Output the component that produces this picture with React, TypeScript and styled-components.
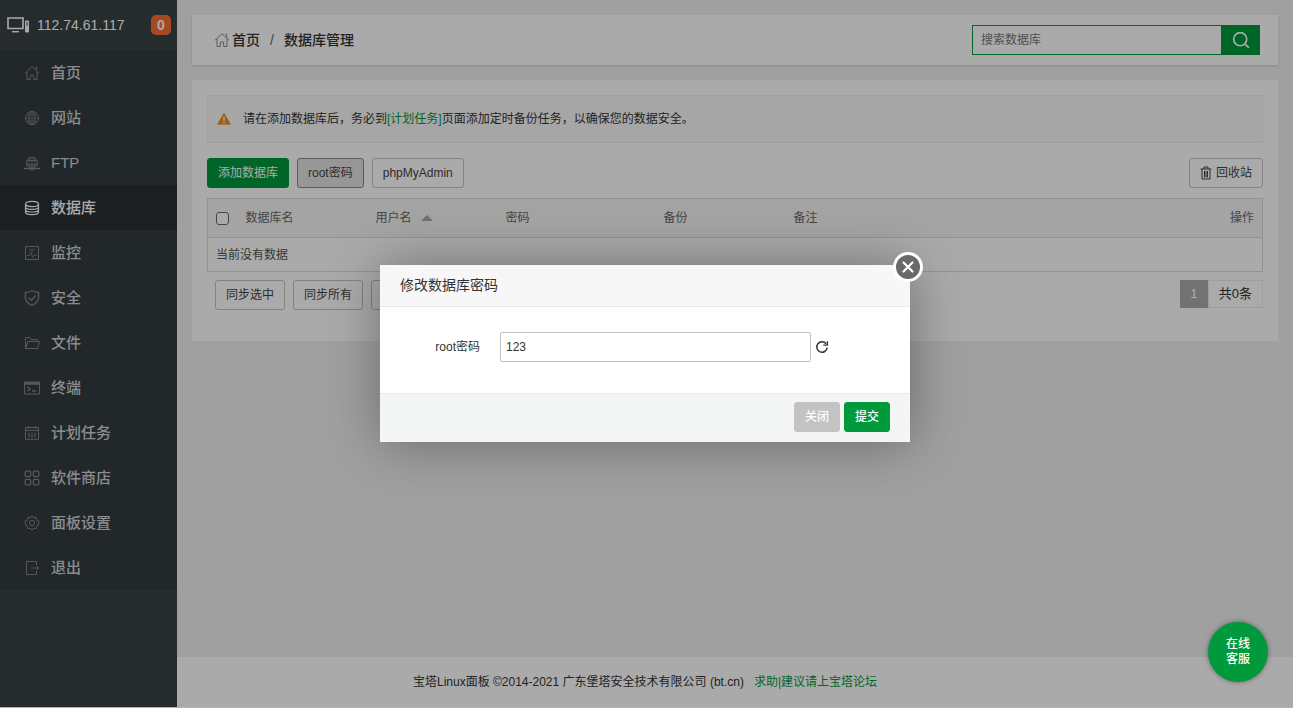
import React from "react";
import styled, { createGlobalStyle } from "styled-components";

const GREEN = "#00993c";

const GlobalStyle = createGlobalStyle`
  *, *::before, *::after { box-sizing: border-box; }
  body {
    margin: 0;
    background: #fff;
    color: #333;
    font: 12px/18px "Liberation Sans", Arial, "Noto Sans CJK SC", sans-serif;
  }
  button, input { font: inherit; }
  a { color: inherit; text-decoration: none; }
`;

/* ---------- page frame ---------- */

const Page = styled.div`
  position: relative;
  display: flex;
  min-height: calc(100vh - 2px);
  border-bottom: 1px solid #9dbcbd;
  background: #f0f0f0;
`;

const Sidebar = styled.aside`
  flex: none;
  width: 177px;
  background: #394146;
`;

const Host = styled.header`
  display: flex;
  align-items: center;
  height: 50px;
  padding: 0 6px 0 7px;
  gap: 8px;
  font-size: 14px;
  color: #fff;
`;

const HostName = styled.span`
  flex: 1;
`;

const Badge = styled.span`
  width: 20px;
  height: 20px;
  border-radius: 5px;
  background: #fc6d30;
  color: #fff;
  font-weight: 700;
  line-height: 20px;
  text-align: center;
`;

const Menu = styled.ul`
  margin: 0;
  padding: 0;
  list-style: none;
  background: #343b40;
`;

const MenuLink = styled.a<{ $active?: boolean }>`
  display: flex;
  align-items: center;
  gap: 11px;
  height: 45px;
  padding-left: 24px;
  font-size: 15px;
  font-weight: 500;
  color: ${(p) => (p.$active ? "#fff" : "#d0d3d5")};
  background: ${(p) => (p.$active ? "#2b2f33" : "transparent")};

  svg { color: ${(p) => (p.$active ? "#fff" : "#80868a")}; }
`;

const Main = styled.div`
  display: flex;
  flex: 1;
  flex-direction: column;
  min-width: 0;
`;

const Content = styled.main`
  display: flex;
  flex: 1;
  flex-direction: column;
  gap: 15px;
  padding: 15px;
`;

const Footer = styled.footer`
  display: flex;
  align-items: center;
  justify-content: center;
  gap: 10px;
  height: 50px;
  padding-right: 180px;
  background: #fff;
`;

const GreenLink = styled.a`
  color: ${GREEN};
`;

/* ---------- content ---------- */

const TopBar = styled.div`
  display: flex;
  align-items: center;
  justify-content: space-between;
  height: 50px;
  padding: 0 18px 0 22px;
  background: #fff;
  box-shadow: 0 1px 2px rgba(0, 0, 0, 0.15);
`;

const Breadcrumb = styled.nav`
  display: flex;
  align-items: center;
  font-size: 14px;
  font-weight: 500;

  svg { margin-right: 2px; color: #888; }
`;

const Slash = styled.span`
  padding: 0 10px;
  color: #666;
`;

const Search = styled.form`
  display: flex;
  height: 30px;
`;

const SearchInput = styled.input`
  width: 249px;
  padding: 0 8px;
  border: 1px solid ${GREEN};
  border-right: 0;
  background: #fff;
  color: #333;
  outline: 0;

  &::placeholder { color: #777; opacity: 1; }
`;

const SearchButton = styled.button`
  display: grid;
  place-items: center;
  width: 39px;
  padding: 0;
  border: 0;
  background: ${GREEN};
  color: #fff;
`;

const Panel = styled.section`
  padding: 15px 15px 31px;
  background: #fff;
`;

const Notice = styled.div`
  display: flex;
  align-items: center;
  gap: 12px;
  height: 48px;
  padding: 0 9px;
  border: 1px solid #efefef;
  background: #fafafa;
`;

const Toolbar = styled.div`
  display: flex;
  gap: 8px;
  margin: 15px 0 10px;
`;

const Button = styled.button<{ $kind?: "primary" | "pressed" | "muted" }>`
  display: inline-flex;
  align-items: center;
  gap: 4px;
  height: 30px;
  min-width: 46px;
  padding: 0 10px;
  border: 1px solid
    ${(p) => (p.$kind === "primary" ? GREEN : p.$kind === "pressed" ? "#8c8c8c" : p.$kind === "muted" ? "#c3c3c3" : "#c4c4c4")};
  border-radius: 3px;
  background: ${(p) => (p.$kind === "primary" ? GREEN : p.$kind === "pressed" ? "#e3e3e3" : p.$kind === "muted" ? "#c3c3c3" : "#fff")};
  color: ${(p) => (p.$kind === "primary" || p.$kind === "muted" ? "#fff" : "#444")};
  white-space: nowrap;
`;

const Spacer = styled.span`
  flex: 1;
`;

const Table = styled.table`
  width: 100%;
  table-layout: fixed;
  border-collapse: collapse;
  border: 1px solid #dcdcdc;
`;

const Col = styled.col<{ $width: number }>`
  width: ${(p) => p.$width}px;
`;

const Th = styled.th<{ $right?: boolean }>`
  height: 39px;
  padding: 0 8px;
  background: #f6f6f6;
  border-bottom: 1px solid #dcdcdc;
  color: #666;
  font-weight: 400;
  text-align: ${(p) => (p.$right ? "right" : "left")};
`;

const Td = styled.td`
  height: 34px;
  padding: 0 8px;
  color: #555;
`;

const Checkbox = styled.input`
  display: block;
  appearance: none;
  width: 13px;
  height: 13px;
  margin: 0;
  border: 1px solid #6a6a6a;
  border-radius: 3px;
  background: #fff;
`;

const SortArrow = styled.span`
  display: inline-block;
  margin-left: 9px;
  border: 6px solid transparent;
  border-top: 0;
  border-bottom-color: #aaa;
  vertical-align: 1px;
`;

const TableFoot = styled.div`
  display: flex;
  gap: 8px;
  padding: 8px 0 0 8px;
`;

const Pager = styled.div`
  display: flex;
  height: 28px;
  font-size: 13px;
  line-height: 28px;
`;

const PageNumber = styled.span`
  width: 28px;
  background: #acacac;
  color: #fff;
  text-align: center;
`;

const PageTotal = styled.span`
  padding: 0 10px;
  border: 1px solid #ececec;
  line-height: 26px;
`;

/* ---------- layers over the page ---------- */

const Shade = styled.div`
  position: absolute;
  inset: 0;
  display: grid;
  place-items: center;
  padding-right: 3px;
  background: rgba(0, 0, 0, 0.333);
`;

const Dialog = styled.div`
  position: relative;
  width: 530px;
  background: #fff;
  box-shadow: 1px 1px 50px rgba(0, 0, 0, 0.35);
`;

const DialogTitle = styled.h2`
  margin: 0;
  padding: 0 20px;
  border-bottom: 1px solid #e8e8e8;
  background: #f7f7f7;
  font-size: 14px;
  font-weight: 400;
  line-height: 41px;
`;

const DialogBody = styled.div`
  display: flex;
  align-items: center;
  padding: 25px 0 31px;
`;

const FieldLabel = styled.label`
  width: 100px;
  margin-right: 20px;
  text-align: right;
`;

const TextInput = styled.input`
  width: 311px;
  height: 30px;
  padding: 0 5px;
  border: 1px solid #c3c3c3;
  border-radius: 2px;
  background: #fff;
  color: #333;
  outline: 0;
`;

const IconButton = styled.button`
  display: grid;
  place-items: center;
  margin-left: 4px;
  padding: 0;
  border: 0;
  background: none;
  color: #333;
`;

const DialogFoot = styled.div`
  display: flex;
  justify-content: flex-end;
  gap: 4px;
  padding: 8px 20px 10px;
  border-top: 1px solid #eaeaea;
  background: #f4f6f6;
  font-weight: 500;
`;

const CloseButton = styled.button`
  position: absolute;
  top: -13px;
  right: -13px;
  display: grid;
  place-items: center;
  width: 30px;
  height: 30px;
  padding: 0;
  border: 3px solid #fff;
  border-radius: 50%;
  background: #696969;
  color: #fff;
`;

const Chat = styled.a`
  position: absolute;
  right: 25px;
  bottom: 25px;
  display: grid;
  place-content: center;
  width: 60px;
  height: 60px;
  border-radius: 50%;
  background: ${GREEN};
  box-shadow: 0 0 5px rgba(0, 0, 0, 0.4);
  color: #fff;
  font-weight: 500;
  line-height: 15px;
  text-align: center;
`;

/* ---------- icons ---------- */

type IconProps = { children: React.ReactNode; size?: number; width?: number };

const Icon = ({ children, size = 16, width = 1 }: IconProps) => (
  <svg width={size} height={size} viewBox="0 0 16 16" fill="none" stroke="currentColor" strokeWidth={width} aria-hidden="true">
    {children}
  </svg>
);

const HomeIcon = () => (
  <Icon>
    <path d="M1 8.3 8 1.8l7 6.5M3 7v7.500h3.300V10h3.400v4.500H13V7M11.200 2.200h1.500v3.600" />
  </Icon>
);

const icons: Record<string, React.ReactNode> = {
  home: <HomeIcon />,
  site: (
    <Icon>
      <circle cx="8" cy="8" r="6.5" />
      <ellipse cx="8" cy="8" rx="3" ry="6.5" />
      <path d="M8 1.5v13M1.5 8h13M2.5 4.800h11M2.5 11.200h11" strokeWidth="0.700" />
    </Icon>
  ),
  ftp: (
    <Icon>
      <path d="M4.2 12A5.600 5.600 0 1 1 11.800 12zM2.600 5.500h10.800M2.600 9.700h10.800M8 12v1" />
      <path d="M0 13.500h16" strokeWidth="1.400" />
      <path d="M6 12c-1.300-3.200-1.300-6.500 0-9.600M10 12c1.300-3.200 1.300-6.500 0-9.600M8 2v10" strokeWidth="0.800" />
      <ellipse cx="8" cy="14" rx="2" ry="1" />
    </Icon>
  ),
  database: (
    <Icon width={1.2}>
      <ellipse cx="8" cy="4" rx="6.500" ry="2.600" />
      <path d="M1.500 4v8c0 1.500 3 2.600 6.500 2.600s6.500-1.100 6.500-2.600V4M1.500 6.700c0 1.500 3 2.600 6.500 2.600s6.500-1.100 6.500-2.600M1.500 9.400C1.500 10.900 4.500 12 8 12s6.500-1.100 6.500-2.600" />
    </Icon>
  ),
  monitor: (
    <Icon>
      <path d="M1.500 1.500h13v13h-13z" />
      <path d="M3 10.500h2.500l1.200-3 2 5 1.300-3 1 1H13M5 4.500h6M6.500 6.500h3" strokeWidth="0.800" />
    </Icon>
  ),
  shield: (
    <Icon width={1.3}>
      <path d="M8 .8c2 1.300 4.300 1.700 6.600 1.700v5.300c0 3.500-2.800 5.900-6.600 7.500-3.800-1.600-6.600-4-6.600-7.500V2.500C3.700 2.500 6 2.100 8 .8z" />
      <path d="m4.700 7.600 2.600 2.700 4.400-4.800" />
    </Icon>
  ),
  folder: (
    <Icon>
      <path d="M1.500 13.500v-11h4.300l1.400 2h6.300v2M1.500 13.500l2.300-7h11.700l-2 7z" />
    </Icon>
  ),
  terminal: (
    <Icon>
      <path d="M.5 2h15v12H.5z" />
      <path d="M.5 3.500h15" strokeWidth="2.500" />
      <path d="m3.500 7 2.500 2-2.500 2.200M8 11h4" strokeWidth="1.300" />
    </Icon>
  ),
  schedule: (
    <Icon>
      <path d="M1.500 2.500h13v11.800h-13zM1.500 5.500h13M4.500 1v3M11.500 1v3M5 7.500v5M8 7.500v5M11 7.500v5" />
    </Icon>
  ),
  store: (
    <Icon width={1.3}>
      <rect x="1.200" y="1.200" width="5.400" height="5.400" rx="1" />
      <rect x="9.400" y="1.200" width="5.400" height="5.400" rx="1" />
      <rect x="1.200" y="9.400" width="5.400" height="5.400" rx="1" />
      <rect x="9.400" y="9.400" width="5.400" height="5.400" rx="1" />
    </Icon>
  ),
  settings: (
    <Icon>
      <path d="m8 .9 1.600 1.900 2.500-.5.500 2.500L15 6.200 14.200 8l.8 1.900-2.400 1.300-.5 2.500-2.500-.5L8 15.100l-1.600-1.900-2.500.5-.5-2.500L1 9.900 1.800 8 1 6.200l2.400-1.400.5-2.500 2.500.5z" />
      <circle cx="8" cy="8" r="2.600" />
    </Icon>
  ),
  logout: (
    <Icon>
      <path d="M12.500 5V1.500h-10v13h10V11M7 8h8M12.700 5.800 15 8l-2.300 2.200" />
    </Icon>
  ),
};

const HostIcon = () => (
  <svg width="22" height="16" viewBox="0 0 22 16" fill="none" stroke="#fff" aria-hidden="true">
    <path d="M1 1h15v10.500H1z" strokeWidth="1.600" />
    <path d="M5 14.700h7" strokeWidth="1.400" />
    <path d="M18.500 4h3v11h-3z" fill="#fff" strokeWidth="1" />
    <path d="M20 5v4" stroke="#394146" />
  </svg>
);

const WarningIcon = () => (
  <svg width="14" height="14" viewBox="0 0 15 14" aria-hidden="true">
    <path d="M7.500 1.200 14.200 12.500H.800z" fill="#f48a1c" stroke="#f48a1c" strokeLinejoin="round" />
    <path d="M7.500 4.500v4.300M7.500 10v1.500" stroke="#fff" strokeWidth="1.500" />
  </svg>
);

const TrashIcon = () => (
  <svg width="12" height="14" viewBox="0 0 12 14" fill="none" stroke="currentColor" aria-hidden="true">
    <path d="M.5 3h11M4 3V1h4v2M2 3v10h8V3M4.500 5v6.500M6 5v6.500M7.500 5v6.500" />
  </svg>
);

/* ---------- data ---------- */

const menu = [
  ["home", "首页"],
  ["site", "网站"],
  ["ftp", "FTP"],
  ["database", "数据库"],
  ["monitor", "监控"],
  ["shield", "安全"],
  ["folder", "文件"],
  ["terminal", "终端"],
  ["schedule", "计划任务"],
  ["store", "软件商店"],
  ["settings", "面板设置"],
  ["logout", "退出"],
];

export default function App() {
  return (
    <>
      <GlobalStyle />
      <Page>
        <Sidebar>
          <Host>
            <HostIcon />
            <HostName>112.74.61.117</HostName>
            <Badge>0</Badge>
          </Host>
          <Menu>
            {menu.map(([icon, label]) => (
              <li key={icon}>
                <MenuLink href="#" $active={icon === "database"}>
                  {icons[icon]}
                  {label}
                </MenuLink>
              </li>
            ))}
          </Menu>
        </Sidebar>

        <Main>
          <Content>
            <TopBar>
              <Breadcrumb>
                <HomeIcon />
                <a href="#">首页</a>
                <Slash>/</Slash>
                <span>数据库管理</span>
              </Breadcrumb>
              <Search>
                <SearchInput type="text" placeholder="搜索数据库" aria-label="搜索数据库" />
                <SearchButton type="button" aria-label="搜索">
                  <Icon size={18} width={1.5}>
                    <circle cx="7.300" cy="7.300" r="5.800" />
                    <path d="m11.500 11.500 3.500 3.500" />
                  </Icon>
                </SearchButton>
              </Search>
            </TopBar>

            <Panel>
              <Notice>
                <WarningIcon />
                <span>
                  请在添加数据库后，务必到<GreenLink href="#">[计划任务]</GreenLink>页面添加定时备份任务，以确保您的数据安全。
                </span>
              </Notice>

              <Toolbar>
                <Button $kind="primary">添加数据库</Button>
                <Button $kind="pressed">root密码</Button>
                <Button>phpMyAdmin</Button>
                <Spacer />
                <Button>
                  <TrashIcon />
                  回收站
                </Button>
              </Toolbar>

              <Table>
                <colgroup>
                  <Col $width={30} />
                  <Col $width={130} />
                  <Col $width={130} />
                  <Col $width={158} />
                  <Col $width={130} />
                  <col />
                  <col />
                </colgroup>
                <thead>
                  <tr>
                    <Th>
                      <Checkbox type="checkbox" aria-label="全选" />
                    </Th>
                    <Th>数据库名</Th>
                    <Th>
                      用户名
                      <SortArrow />
                    </Th>
                    <Th>密码</Th>
                    <Th>备份</Th>
                    <Th>备注</Th>
                    <Th $right>操作</Th>
                  </tr>
                </thead>
                <tbody>
                  <tr>
                    <Td colSpan={7}>当前没有数据</Td>
                  </tr>
                </tbody>
              </Table>

              <TableFoot>
                <Button>同步选中</Button>
                <Button>同步所有</Button>
                <Button aria-label="从服务器获取" />
                <Spacer />
                <Pager>
                  <PageNumber>1</PageNumber>
                  <PageTotal>共0条</PageTotal>
                </Pager>
              </TableFoot>
            </Panel>
          </Content>

          <Footer>
            <span>宝塔Linux面板 ©2014-2021 广东堡塔安全技术有限公司 (bt.cn)</span>
            <GreenLink href="#">求助|建议请上宝塔论坛</GreenLink>
          </Footer>
        </Main>

        <Shade>
          <Dialog role="dialog" aria-labelledby="dialog-title">
            <DialogTitle id="dialog-title">修改数据库密码</DialogTitle>
            <DialogBody>
              <FieldLabel htmlFor="root-password">root密码</FieldLabel>
              <TextInput id="root-password" type="text" defaultValue="123" />
              <IconButton type="button" aria-label="随机密码">
                <Icon size={14} width={1.7}>
                  <path d="M12.800 4.300A6 6 0 1 0 14 8.700" />
                  <path d="M9.500 5.800h4.700V1.300" strokeWidth="1.500" />
                </Icon>
              </IconButton>
            </DialogBody>
            <DialogFoot>
              <Button $kind="muted">关闭</Button>
              <Button $kind="primary">提交</Button>
            </DialogFoot>
            <CloseButton type="button" aria-label="关闭">
              <Icon size={16} width={2.2}>
                <path d="m3.500 3.500 9 9M12.500 3.500l-9 9" strokeLinecap="round" />
              </Icon>
            </CloseButton>
          </Dialog>
        </Shade>

        <Chat href="#">
          <span>在线</span>
          <span>客服</span>
        </Chat>
      </Page>
    </>
  );
}
